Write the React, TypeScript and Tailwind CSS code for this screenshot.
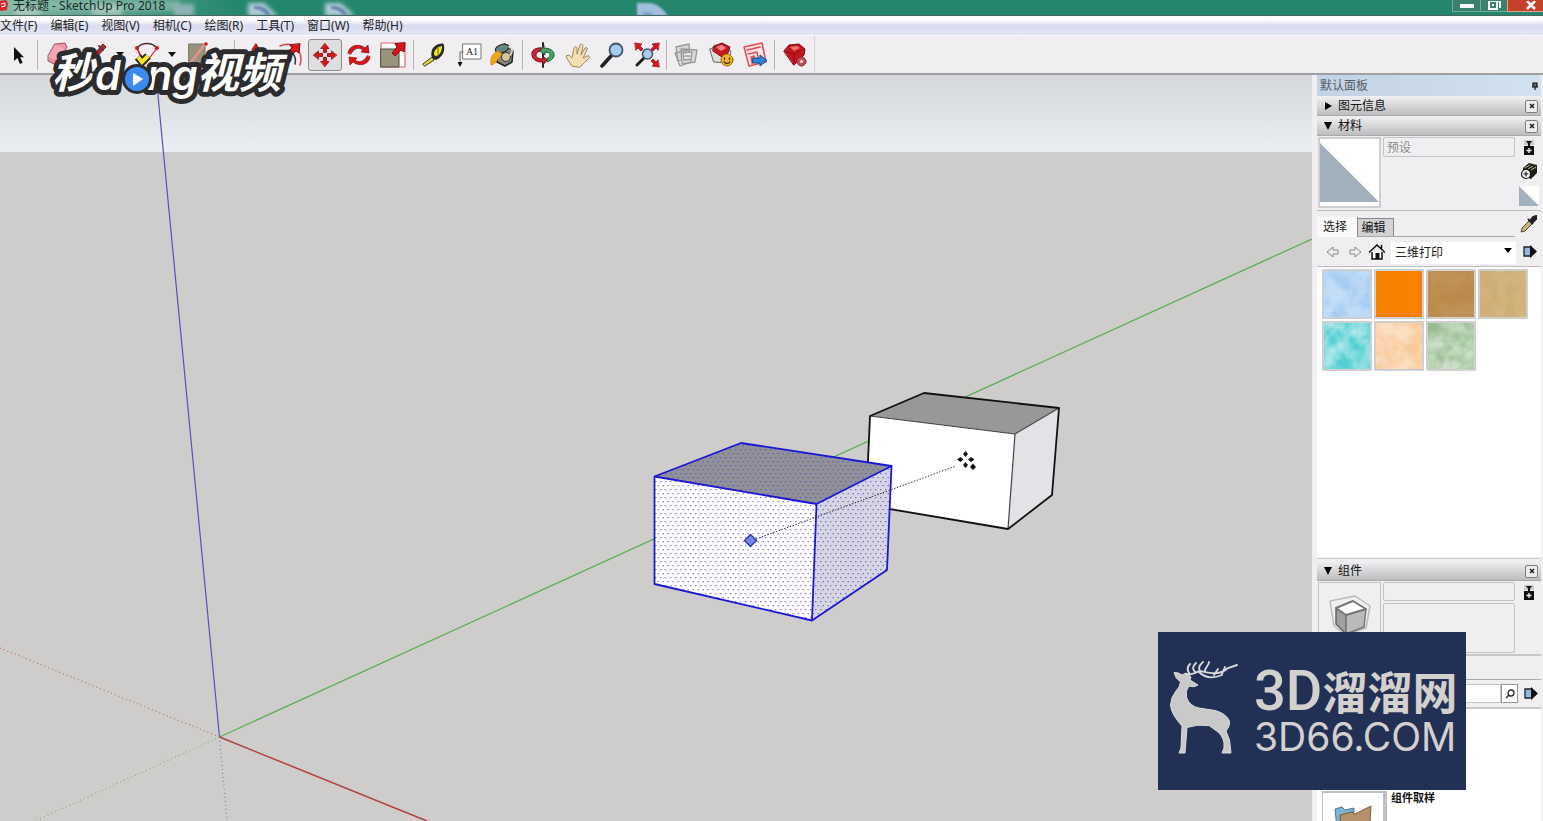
import React from "react";

const UI = "font-['Noto_Sans','Noto_Sans_CJK_SC',sans-serif]";

const menus = ["文件(F)", "编辑(E)", "视图(V)", "相机(C)", "绘图(R)", "工具(T)", "窗口(W)", "帮助(H)"];

const red = "#d8141c";

function Icon({ children }: { children: React.ReactNode }) {
  return (
    <svg viewBox="0 0 26 26" className="size-[26px] shrink-0" strokeLinecap="round" strokeLinejoin="round" aria-hidden="true">
      {children}
    </svg>
  );
}

const icons: Record<string, React.ReactNode> = {
  select: <path d="M9 5v14l3.4-3 2.6 6 2.6-1.2-2.5-5.6H19z" fill="#111" />,
  eraser: (
    <>
      <path d="M9 2l10-1 2 4-3 6-8 12-8-4 0-5z" fill="#ee91a6" stroke="#9d5264" />
      <path d="M2 15l8 3 8-12-9-3z" fill="#f4a7b8" />
      <path d="M10 17v6" stroke="#c06a7c" />
    </>
  ),
  pencil: (
    <>
      <path d="M3 24l3-7L19 2l3 3L9 19z" fill="#c8222a" stroke="#58201d" />
      <path d="M15 4l4 4" stroke="#444" strokeWidth="2" />
    </>
  ),
  arc: (
    <>
      <path d="M3 6C8 0 18 0 23 6" fill="none" stroke="#333" strokeWidth="1.4" />
      <path d="M3 6l8 16L23 6M3 6l4 10" fill="none" stroke={red} strokeWidth="1.2" />
      <circle cx="3" cy="6" r="2" fill={red} />
      <circle cx="23" cy="6" r="2" fill={red} />
    </>
  ),
  rect: (
    <>
      <path d="M5 2h16v22H5z" fill="#99937c" stroke="#777263" />
      <path d="M5 23L21 2" stroke="#ee8f8f" strokeWidth="2.2" />
      <circle cx="22" cy="2" r="1.8" fill={red} />
    </>
  ),
  push: (
    <>
      <path d="M3 18l8-5 12 4-9 6z" fill="#99937c" stroke="#555" />
      <path d="M13 2l4 6v3h-2v6h-4v-6H9V8z" fill={red} stroke="#8b0d12" />
    </>
  ),
  offset: (
    <>
      <path d="M2 4C15-2 26 10 22 23" fill="none" stroke="#e5444a" strokeWidth="1.5" />
      <path d="M5 10c8-3 14 3 12 12" fill="none" stroke="#333" strokeWidth="1.5" />
      <path d="M22 2l-1 9-3-2-5 5-4-4 5-4-2-3z" fill={red} stroke="#7c0c10" />
    </>
  ),
  move: (
    <g fill={red} stroke="#8b0d12" strokeWidth=".8">
      <path d="M13 1.500l4 5h-2.500v4h-3v-4H9z" />
      <path d="M13 24.500l4-5h-2.500v-4h-3v4H9z" />
      <path d="M1.500 13l5-4v2.500h4v3h-4V17z" />
      <path d="M24.500 13l-5-4v2.500h-4v3h4V17z" />
    </g>
  ),
  rotate: (
    <g fill={red} stroke="#8b0d12" strokeWidth=".7">
      <path d="M2 11C3 3 13 1 19 6l3-3 1 8-8-1 2-2C13 5 8 6 5 12z" />
      <path d="M24 15c-1 8-11 10-17 5l-3 3-1-8 8 1-2 2c4 3 9 2 12-4z" />
    </g>
  ),
  scale: (
    <>
      <path d="M1 1h24v24H1z" fill="#fff" stroke="#e6646a" strokeWidth="1.200" />
      <path d="M1 7h18v18H1z" fill="#99937c" stroke="#4b483d" />
      <path d="M25 1l-1 9-3-2-6 6-3-3 5-6-2-3z" fill={red} stroke="#7c0c10" />
    </>
  ),
  tape: (
    <>
      <path d="M2 22l9-7 2 3-9 6z" fill="#e8dc28" stroke="#333" />
      <path d="M11 13C10 6 15 2 22 2c2 5 0 12-6 15-3 1-5-1-5-4z" fill="#2b2b28" stroke="#1b1b1b" />
      <path d="M13 12c0-4 3-7 8-8 0 5-2 9-6 10-1 0-2-1-2-2z" fill="#f0e52b" />
      <path d="M17 6v6" stroke="#6d6a1a" />
    </>
  ),
  text: (
    <>
      <path d="M7 2h18v15H7z" fill="#fff" stroke="#777" />
      <text x="16" y="13" fontSize="10" textAnchor="middle" fill="#222" fontFamily="Liberation Serif">A1</text>
      <path d="M7 10H4v12" fill="none" stroke="#666" />
      <path d="M1.500 20h5L4 25z" fill="#111" />
    </>
  ),
  paint: (
    <>
      <path d="M8 6l8-4 8 7-1 11-7 4-8-4z" fill="#8c8877" stroke="#222" strokeWidth="1.500" />
      <ellipse cx="13" cy="6.500" rx="7" ry="4" fill="#64867f" stroke="#222" transform="rotate(-18 13 6.500)" />
      <circle cx="17" cy="15" r="4.500" fill="#cfc6a4" stroke="#333" />
      <path d="M20 5c4 1 4 6 1 8" fill="none" stroke="#e4dfce" strokeWidth="1.600" />
      <path d="M9 9C3 11 1 17 2 23c4 0 5-4 8-7l3-4z" fill="#f3a51c" stroke="#c77c08" strokeWidth=".7" />
    </>
  ),
  orbit: (
    <>
      <path d="M13 1v24" stroke="#222" strokeWidth="2" />
      <path d="M12 6C5 5 1 9 2 13c1 6 6 7 11 7v3l4-5-4-4v3c-4 0-7-1-7-4s3-4 6-4z" fill="#cf2433" stroke="#6c1018" />
      <path d="M14 6c6 0 11 3 10 8-1 3-4 5-7 6v-4c2 0 3-1 3-3s-2-3-5-3v3l-5-4 4-5z" fill="#3fa968" stroke="#1d5432" />
    </>
  ),
  hand: <path d="M8 24c-3-4-5-7-6-10l3-1 3 3 2-10c1-2 3-1 3 0v6l3-9c1-2 3-1 3 1l-2 9 4-7c1-1 3 0 2 2l-4 8 4-2c2-1 3 1 2 2l-6 6-3 3z" fill="#f3dfb4" stroke="#a08559" strokeWidth="1" />,
  zoom: (
    <>
      <path d="M3 24l9-10" stroke="#222" strokeWidth="3.500" />
      <circle cx="17" cy="8" r="6.500" fill="#a9cdec" stroke="#44536a" strokeWidth="1.800" />
    </>
  ),
  extents: (
    <>
      <path d="M3 23l8-8" stroke="#222" strokeWidth="3" />
      <circle cx="13.500" cy="12" r="5" fill="#a9cdec" stroke="#44536a" strokeWidth="1.500" />
      <g fill={red} stroke="#8b0d12" strokeWidth=".7">
        <path d="M1 1l7 1-2 2 3 3-2 2-3-3-2 2z" />
        <path d="M25 1l-7 1 2 2-3 3 2 2 3-3 2 2z" />
        <path d="M25 25l-7-1 2-2-3-3 2-2 3 3 2-2z" />
      </g>
    </>
  ),
  warehouse: (
    <g fill="#d7d7d7" stroke="#999" strokeWidth="1.300">
      <path d="M3 5l13-3 1 13-12 4z" />
      <path d="M8 7l16 1-2 12-13 2z" />
      <path d="M2 11l14-3 2 12-11 4z" fill="none" />
      <path d="M10 11l9-1-1 7-7 1zM12 14h5" fill="#eee" />
    </g>
  ),
  extension: (
    <>
      <path d="M2 7l12-5 9 7-3 12-14-1z" fill="#ddd" stroke="#666" />
      <path d="M6 4l8-3 8 4-2 6-6 4-9-6z" fill="#c51b24" stroke="#7c0c10" />
      <path d="M8 5l6-2 4 3-5 3z" fill="#f0878a" />
      <circle cx="19" cy="18" r="6" fill="#f2b728" stroke="#9b6808" />
      <path d="M16.500 16v1.500M21.500 16v1.500M16 20q3 3 6 0" fill="none" stroke="#4b3300" strokeWidth="1.300" />
    </>
  ),
  layout: (
    <>
      <path d="M2 5l18-4 4 19-17 4z" fill="#fbe5e5" stroke="#e24b51" strokeWidth="1.500" />
      <path d="M5 8l13-3M6 12l9-2 2 10M9 15l3-1 1 6-3 1z" fill="none" stroke="#e24b51" strokeWidth="1.500" />
      <path d="M11 16h7v-3l7 5.500-7 5.500v-3h-7z" fill="#2b86d9" stroke="#174d86" />
    </>
  ),
  gem: (
    <>
      <path d="M2 9l5-6 10-1 6 5-1 6-10 10z" fill="#c3151f" stroke="#760c12" />
      <path d="M3 9l9 3 10-5M12 12v10" fill="none" stroke="#8e0e15" />
      <path d="M8 5l7-1 3 2-6 3z" fill="#ef7074" />
      <circle cx="19.500" cy="19.500" r="4.500" fill="#c94c55" stroke="#8a3038" />
      <circle cx="19.500" cy="19.500" r="1.600" fill="#f3dcdc" />
    </>
  ),
};

type Tool = { kind: "tool" | "drop" | "sep"; icon?: string; label?: string; width: string; active?: boolean };

const tools: Tool[] = [
  { kind: "tool", icon: "select", label: "选择", width: "w-9" },
  { kind: "sep", width: "w-[2px]" },
  { kind: "tool", icon: "eraser", label: "擦除", width: "w-[42px]" },
  { kind: "tool", icon: "pencil", label: "直线", width: "w-[34px]" },
  { kind: "drop", label: "直线选项", width: "w-3" },
  { kind: "tool", icon: "arc", label: "圆弧", width: "w-[42px]" },
  { kind: "drop", label: "圆弧选项", width: "w-2" },
  { kind: "tool", icon: "rect", label: "矩形", width: "w-[42px]" },
  { kind: "drop", label: "矩形选项", width: "w-3" },
  { kind: "sep", width: "w-2" },
  { kind: "tool", icon: "push", label: "推拉", width: "w-9" },
  { kind: "tool", icon: "offset", label: "偏移", width: "w-[34px]" },
  { kind: "tool", icon: "move", label: "移动", width: "w-[34px]", active: true },
  { kind: "tool", icon: "rotate", label: "旋转", width: "w-[34px]" },
  { kind: "tool", icon: "scale", label: "缩放", width: "w-[34px]" },
  { kind: "sep", width: "w-[6px]" },
  { kind: "tool", icon: "tape", label: "卷尺", width: "w-9" },
  { kind: "tool", icon: "text", label: "文字", width: "w-[34px]" },
  { kind: "tool", icon: "paint", label: "材质", width: "w-8" },
  { kind: "sep", width: "w-2" },
  { kind: "tool", icon: "orbit", label: "环绕观察", width: "w-[34px]" },
  { kind: "tool", icon: "hand", label: "平移", width: "w-[34px]" },
  { kind: "tool", icon: "zoom", label: "视图缩放", width: "w-9" },
  { kind: "tool", icon: "extents", label: "充满视窗", width: "w-[34px]" },
  { kind: "sep", width: "w-1" },
  { kind: "tool", icon: "warehouse", label: "模型库", width: "w-9" },
  { kind: "tool", icon: "extension", label: "扩展程序库", width: "w-[34px]" },
  { kind: "tool", icon: "layout", label: "发送到布局", width: "w-[34px]" },
  { kind: "sep", width: "w-1" },
  { kind: "tool", icon: "gem", label: "扩展程序管理器", width: "w-[38px]" },
];

function TitleBar() {
  return (
    <header className="flex h-4 shrink-0 items-start justify-between overflow-hidden border-b border-[#47675f] bg-[#24866d]">
      <div className="relative flex h-full flex-1 items-start">
        <div className="absolute inset-0 flex h-full items-end overflow-hidden">
          <svg viewBox="0 0 700 15" className="h-[15px] w-[700px] shrink-0" aria-hidden="true">
            <defs>
              <filter id="glow" x="-20%" y="-60%" width="140%" height="220%"><feGaussianBlur stdDeviation="2" /></filter>
              <filter id="soft"><feGaussianBlur stdDeviation="1" /></filter>
              <linearGradient id="glass" x1="0" x2="1"><stop offset="0" stopColor="#7fb5a4" /><stop offset="1" stopColor="#24866d" /></linearGradient>
            </defs>
            <rect width="240" height="16" fill="url(#glass)" />
            <g filter="url(#glow)">
              <path d="M-10 0h190v11H-10z" fill="#8ebcae" opacity=".7" />
              <path d="M15 7h25v9H15zM92 5h30v11H92z" fill="#c6d5cf" opacity=".6" />
              <path d="M174 4h20v12h-20z" fill="#8fb3b5" />
              <path d="M248 3h16l14 13h-30zM325 3h16l14 13h-30z" fill="#b0cdd6" />
            </g>
            <path d="M254 6q12-1 17 9h-5q-4-6-12-6zM331 6q12-1 17 9h-5q-4-6-12-6z" fill="#6282b0" filter="url(#soft)" />
            <g filter="url(#soft)">
              <path d="M637 3h14q10 2 17 13h-31z" fill="#a0c0dc" />
              <path d="M643 12h8l2 4h-10z" fill="#7d9fca" />
            </g>
          </svg>
        </div>
        <div className="relative flex items-start gap-[5px]">
          <svg viewBox="0 0 8 12" className="h-3 w-2" aria-hidden="true">
            <path d="M0 1l6-1 2 3-1 7-7 1z" fill="#d8262c" />
            <path d="M1 4l4-1v3l-4 1" fill="none" stroke="#fff" />
          </svg>
          <h1 className="text-[12px] leading-[12px] whitespace-nowrap text-[#132c26]">无标题 - SketchUp Pro 2018</h1>
        </div>
      </div>
      <div className="flex h-3 shrink-0">
        <button aria-label="最小化" className="flex w-[29px] items-center justify-center border border-t-0 border-[#75ad9c] bg-[#3b806e]">
          <svg viewBox="0 0 14 4" className="h-1 w-[14px]"><path d="M0 0h14v4H0z" fill="#f5f5f5" /></svg>
        </button>
        <button aria-label="还原" className="flex w-[26px] items-center justify-center border-b border-[#75ad9c] bg-[#3b806e]">
          <svg viewBox="0 0 13 10" className="h-[10px] w-[13px]" fill="none" stroke="#f5f5f5" strokeWidth="2"><path d="M4 0h8v7M1 0h8v8H1zM5 3v2" /></svg>
        </button>
        <button aria-label="关闭" className="flex w-9 items-center justify-end border-b border-l border-[#e9a08f] bg-[#c4412b] pr-[6px]">
          <svg viewBox="0 0 12 9" className="h-[9px] w-3" stroke="#fff" strokeWidth="2.500"><path d="M2 0l8 8M10 0L2 8" /></svg>
        </button>
      </div>
    </header>
  );
}

function MenuBar() {
  return (
    <nav className="flex h-[19px] shrink-0 items-end gap-[13px] bg-linear-to-b from-[#fdfdff] from-20% via-[#d9dcf0] via-50% to-[#e4e6f5]">
      {menus.map((m) => (
        <button key={m} className="text-[12px] leading-[18px] whitespace-nowrap text-[#222]">{m}</button>
      ))}
    </nav>
  );
}

function Toolbar() {
  return (
    <div className="flex h-10 shrink-0 items-stretch border-t border-b-2 border-t-[#f9f8fa] border-b-[#a09fa1] bg-[#f0eef1]" role="toolbar">
      <div className="flex items-center border-r border-[#d3d2d4]">
        {tools.map((t, i) => {
          if (t.kind === "sep")
            return (
              <span key={i} className={`${t.width} flex h-[30px] justify-center`}>
                <span className="w-px bg-[#b3b2b4]" />
              </span>
            );
          if (t.kind === "drop")
            return (
              <button key={i} aria-label={t.label} className={`${t.width} flex h-8 items-center justify-center`}>
                <svg viewBox="0 0 8 6" className="h-[6px] w-2"><path d="M0 0h8L4 5z" fill="#111" /></svg>
              </button>
            );
          return (
            <button
              key={i}
              aria-label={t.label}
              className={`${t.width} ${t.active ? "rounded-[3px] border border-[#8b8a8c] bg-[#dedddf]" : ""} flex h-8 items-center justify-center`}
            >
              <Icon>{icons[t.icon as string]}</Icon>
            </button>
          );
        })}
      </div>
    </div>
  );
}

function Viewport() {
  return (
    <main className="min-w-0 flex-1 overflow-hidden bg-[#cecdcb]">
      <svg viewBox="0 75 1312 746" preserveAspectRatio="xMinYMin slice" className="h-full w-full" role="img" aria-label="模型视图">
        <defs>
          <linearGradient id="sky" x1="0" y1="0" x2="0" y2="1">
            <stop offset="0" stopColor="#d5d7db" />
            <stop offset="1" stopColor="#ebeff0" />
          </linearGradient>
          <pattern id="dots" width="5" height="8" patternUnits="userSpaceOnUse">
            <path d="M0 1h1.400v1.300H0zM2.500 5h1.400v1.300H2.500z" fill="#4a4ae0" opacity=".75" />
          </pattern>
        </defs>
        <rect x="0" y="75" width="1312" height="77" fill="url(#sky)" />
        <rect x="0" y="152" width="1312" height="700" fill="#cecdcb" />

        <g fill="none" strokeWidth="1.200">
          <path d="M219.500 737L1312 239" stroke="#55b04f" />
          <path d="M219.500 737L156 75" stroke="#5452c0" />
          <path d="M219.500 737L427 821" stroke="#b0403e" strokeWidth="1.500" />
          <path d="M219.500 737L0 648" stroke="#bf7373" strokeDasharray="1 3" />
          <path d="M219.500 737L35 821" stroke="#78b478" strokeDasharray="1 3" />
          <path d="M219.500 737L227 821" stroke="#7c7cc4" strokeDasharray="1 3" />
        </g>

        <g strokeLinejoin="round">
          <path d="M870 416L1015 434 1008 529 866 505z" fill="#fff" />
          <path d="M870 416L924 393 1059 408 1015 434z" fill="#999899" />
          <path d="M1015 434L1059 408 1052 495 1008 529z" fill="#e3e2e7" />
          <path d="M870 416L1015 434 1008 529M1015 434L1059 408" fill="none" stroke="#444" strokeWidth="1.200" />
          <path d="M866 505L870 416 924 393 1059 408 1052 495 1008 529z" fill="none" stroke="#111" strokeWidth="1.800" />
        </g>

        <g strokeLinejoin="round">
          <path d="M654.500 476.500L816.500 504 812 620.500 654.500 584z" fill="#fff" />
          <path d="M654.500 476.500L741 443 891.500 466 816.500 504z" fill="#929196" />
          <path d="M816.500 504L891.500 466 887 570 812 620.500z" fill="#d6d5e0" />
          <path d="M654.500 476.500L741 443 891.500 466 887 570 812 620.500 654.500 584z" fill="url(#dots)" />
          <path d="M654.500 476.500L741 443 891.500 466 887 570 812 620.500 654.500 584zM654.500 476.500L816.500 504 812 620.500M816.500 504L891.500 466" fill="none" stroke="#1a18d4" strokeWidth="1.800" />
        </g>

        <path d="M756 539L956 466" stroke="#333" strokeDasharray="1.500 1.500" />
        <path d="M750.500 534.500l6 6-6 6-6-6z" fill="#7486ea" stroke="#2b35ab" strokeWidth="1.400" />
        <path d="M965.500 451l2.500 3-2.500 3-2.500-3zM965.500 462l2.500 3-2.500 3-2.500-3zM957 459.500l3.500-2.500 3 2.500-3 2.500zM968 459.500l3-2.500 3.500 2.500-3.500 2.500zM973 463.500l3 3.500-3 3-3-3z" fill="#111" />
      </svg>
    </main>
  );
}

function PanelHeader({ title, open }: { title: string; open: boolean }) {
  return (
    <div className="flex h-[19px] shrink-0 items-center border-b border-[#a9a8aa] bg-linear-to-b from-[#efeef0] to-[#bdbcbe] pr-[3px] pl-[7px]">
      <button className="flex flex-1 items-center gap-[6px] text-left text-[12px] leading-[18px] text-[#111]" aria-expanded={open}>
        <svg viewBox="0 0 8 8" className="size-2">{open ? <path d="M0 0h8L4 8z" /> : <path d="M1 0l7 4-7 4z" />}</svg>
        {title}
      </button>
      <button aria-label={`关闭${title}`} className="flex size-[13px] items-center justify-center rounded-[2px] border border-[#7e7d7f] bg-[#ececee]">
        <svg viewBox="0 0 6 6" className="size-[6px]" stroke="#222" strokeWidth="1.500"><path d="M1 1l4 4M5 1L1 5" /></svg>
      </button>
    </div>
  );
}

function Lock() {
  return (
    <svg viewBox="0 0 12 16" className="h-4 w-3">
      <path d="M1 0h10v5H1z" fill="#ccc" />
      <path d="M3 1h6L6 5z" fill="#111" />
      <path d="M5 4h2v2H5zM1 6h10v9H1z" fill="#111" />
      <path d="M6 8v5M3.500 10.500h5" stroke="#fff" strokeWidth="1.300" />
    </svg>
  );
}

function Details() {
  return (
    <svg viewBox="0 0 14 14" className="size-[14px]">
      <path d="M1 2h7v9H1z" fill="#8fb9e4" stroke="#222" strokeWidth="1.300" />
      <path d="M7 0l7 6.500L7 13z" fill="#111" />
    </svg>
  );
}

const swatches = [
  { name: "浅蓝", cls: "bg-[#a5ccf2]", grain: 0.35 },
  { name: "橙色", cls: "bg-[#fa8000]", grain: 0 },
  { name: "棕色", cls: "bg-[#bb8949]", grain: 0.08 },
  { name: "浅棕", cls: "bg-[#cdac72]", grain: 0.1 },
  { name: "青色", cls: "bg-[#50ced2]", grain: 0.5 },
  { name: "浅橙", cls: "bg-[#fac998]", grain: 0.4 },
  { name: "绿色", cls: "bg-[#97bd90]", grain: 0.5 },
];

function Materials() {
  return (
    <section className="flex flex-col">
      <PanelHeader title="材料" open />
      <div className="flex h-[75px] gap-[2px] border-b border-[#bcbbbd] pt-[1px] pl-px">
        <div className="h-[71px] w-[63px] border-2 border-[#cfced0] bg-white">
          <svg viewBox="0 0 59 67" className="h-full w-full" preserveAspectRatio="none"><path d="M0 4L59 63H0z" fill="#a3b0bd" /></svg>
        </div>
        <input aria-label="材料名称" defaultValue="预设" className="h-5 w-[132px] rounded-[2px] border border-[#c4c3c5] bg-[#f0eef1] px-[3px] text-[12px] text-[#8b8a8c]" />
        <div className="flex flex-1 flex-col items-center gap-[6px] pt-[3px]">
          <button aria-label="显示辅助窗格"><Lock /></button>
          <button aria-label="创建材质">
            <svg viewBox="0 0 18 18" className="size-[18px]">
              <path d="M3 6l6-5 8 2v8l-6 6-8-3z" fill="#1d1d18" />
              <path d="M5 6l5-3M8 7l5-3M11 8l5-3" stroke="#b9b692" />
              <circle cx="6" cy="12" r="4.500" fill="#fff" stroke="#111" strokeWidth="1.200" />
              <path d="M6 9.500v5M3.500 12h5" stroke="#111" strokeWidth="1.200" />
            </svg>
          </button>
          <button aria-label="默认材质">
            <svg viewBox="0 0 20 20" className="size-5"><path d="M0 0h20v20H0z" fill="#fff" /><path d="M0 0l20 20H0z" fill="#a3b0bd" /></svg>
          </button>
        </div>
      </div>
      <div className="flex h-[26px] items-end justify-between">
        <div className="flex flex-1 items-end border-b border-[#a8a7a9]" role="tablist">
          <button role="tab" aria-selected="true" className="-mb-px h-5 w-[41px] border-r border-[#88878a] bg-[#f9f8fa] pr-1 text-[12px] leading-[16px] text-[#222]">选择</button>
          <button role="tab" aria-selected="false" className="h-[18px] w-9 border-t border-r border-[#88878a] bg-[#d2d1d3] pr-1 text-[12px] leading-[16px] text-[#111]">编辑</button>
        </div>
        <button aria-label="提取材质" className="px-1 pb-1">
          <svg viewBox="0 0 18 18" className="size-[18px]">
            <path d="M2 17l1-4 7-7 3 3-7 7z" fill="#c6b57a" stroke="#4d4a3d" />
            <path d="M9 4l5 5M11 6l3-4 3-1v3l-4 4z" fill="#222" stroke="#222" strokeWidth="2" />
          </svg>
        </button>
      </div>
      <div className="flex h-[30px] items-center border-b border-[#bcbbbd] pr-1 pl-2">
        <button aria-label="后退" className="w-[23px] pl-[1px]">
          <svg viewBox="0 0 14 14" className="size-[14px]"><path d="M1 7l6-5v3h5v4H7v3z" fill="#eee" stroke="#888" /></svg>
        </button>
        <button aria-label="前进" className="w-[21px]">
          <svg viewBox="0 0 14 14" className="size-[14px]"><path d="M13 7L7 2v3H2v4h5v3z" fill="#eee" stroke="#888" /></svg>
        </button>
        <button aria-label="模型中" className="w-[22px]">
          <svg viewBox="0 0 16 16" className="size-4"><path d="M3 8v7h10V8" fill="#fff" stroke="#111" strokeWidth="1.500" /><path d="M0 8.500L8 1l8 7.500M12.500 1v4" fill="none" stroke="#111" strokeWidth="1.500" /><path d="M6.500 9h4v6h-4z" fill="#111" /></svg>
        </button>
        <div className="relative flex-1">
          <select aria-label="材质库" className="h-[22px] w-full appearance-none bg-white pl-1 text-[12px] text-[#222]">
            <option>三维打印</option>
          </select>
          <svg viewBox="0 0 8 5" className="pointer-events-none absolute top-[9px] right-1 h-[5px] w-2"><path d="M0 0h8L4 5z" /></svg>
        </div>
        <button aria-label="材料详细信息" className="ml-[7px]"><Details /></button>
      </div>
      <div className="flex h-[290px] flex-wrap content-start gap-[2px] bg-white pt-[2px] pl-[5px]">
        {swatches.map((s, i) => (
          <button key={s.name} aria-label={s.name} className={`${s.cls} size-[50px] border-2 border-[#cfced0]`}>
            {s.grain > 0 && (
              <svg viewBox="0 0 46 46" className="size-full">
                <filter id={`grain${i}`} x="0" y="0" width="100%" height="100%">
                  <feTurbulence type="fractalNoise" baseFrequency="0.06" numOctaves="3" seed={i + 3} />
                  <feColorMatrix values="0 0 0 0 1  0 0 0 0 1  0 0 0 0 1  2.4 0 0 0 -0.7" />
                </filter>
                <rect width="46" height="46" filter={`url(#grain${i})`} opacity={s.grain} />
              </svg>
            )}
          </button>
        ))}
      </div>
    </section>
  );
}

function Components() {
  return (
    <section className="flex min-h-0 flex-1 flex-col border-t border-[#d0cfd1] pt-[3px]">
      <PanelHeader title="组件" open />
      <div className="flex h-[75px] shrink-0 gap-[2px] border-b-2 border-[#c7c6c8] pt-px pl-px">
        <div className="flex h-[71px] w-[63px] justify-center border border-[#c4c3c5] pt-3">
          <svg viewBox="0 0 42 42" className="size-[42px]" strokeLinejoin="round">
            <path d="M1 6l25-5 15 10-4 22-21 7L5 31z" fill="none" stroke="#bbb" strokeWidth="1.500" />
            <path d="M7 13v16l10 10V20z" fill="#a09fa1" stroke="#666" strokeWidth="1.500" />
            <path d="M17 20l20-6-2 18-18 7z" fill="#bab9bb" stroke="#777" strokeWidth="1.500" />
            <path d="M7 13l17-7 13 8-20 6z" fill="#fff" stroke="#777" strokeWidth="2" />
          </svg>
        </div>
        <div className="flex flex-col gap-[2px]">
          <input aria-label="组件名称" className="h-[19px] w-[132px] rounded-[2px] border border-[#c4c3c5] bg-[#f0eef1] px-1 text-[12px]" />
          <textarea aria-label="组件说明" className="h-[50px] w-[132px] resize-none rounded-[2px] border border-[#c4c3c5] bg-[#f0eef1] px-1 text-[12px]" />
        </div>
        <div className="flex flex-1 justify-center pt-[3px]">
          <button aria-label="显示辅助窗格" className="h-4"><Lock /></button>
        </div>
      </div>
      <div className="h-6 shrink-0 border-b border-[#a8a7a9]" />
      <div className="flex h-[29px] shrink-0 items-center border-b-2 border-[#c7c6c8] pr-[3px] pl-[74px]">
        <input aria-label="搜索组件" className="h-[19px] min-w-0 flex-1 border border-[#c4c3c5] bg-white px-1 text-[12px]" />
        <button aria-label="搜索" className="flex h-[19px] w-[17px] items-center justify-center border border-[#99989a] bg-white">
          <svg viewBox="0 0 10 10" className="size-[10px]" fill="none" stroke="#222" strokeWidth="1.300"><circle cx="6" cy="4" r="3" /><path d="M4 6L1 9" /></svg>
        </button>
        <button aria-label="组件详细信息" className="ml-[6px]"><Details /></button>
      </div>
      <div className="flex min-h-0 flex-1 items-start gap-1 overflow-hidden bg-white pt-[82px] pl-[5px]">
        <div className="flex h-[66px] w-[65px] shrink-0 justify-center border-t-2 border-r-4 border-l border-[#c0bfc1] bg-white pt-3">
          <svg viewBox="0 0 38 40" className="h-10 w-[38px]">
            <path d="M1 4l7-2 3 3 9-2v30H4z" fill="#7fb3d4" stroke="#4f7790" />
            <path d="M6 10l12-3 3 2 16-8-2 32-27 5z" fill="#b5926a" stroke="#785c3d" />
          </svg>
        </div>
        <span className="text-[11px] leading-[14px] font-bold text-[#111]">组件取样</span>
      </div>
    </section>
  );
}

function Tray() {
  return (
    <aside className="flex w-[231px] shrink-0 flex-col overflow-hidden bg-[#f0eef1] pr-[2px] pl-[5px]">
      <div className="flex h-[21px] shrink-0 items-center justify-between bg-linear-to-r from-[#c3d2e4] to-[#d3e2f1] pr-[2px] pl-[3px]">
        <h2 className="text-[12px] leading-[18px] text-[#555d66]">默认面板</h2>
        <button aria-label="自动隐藏">
          <svg viewBox="0 0 8 8" className="size-2"><path d="M2 1h4v4H2z" fill="#667" /><path d="M2 1h4v4H2zM1 5h6M4 5v3" fill="none" stroke="#111" strokeWidth="1.200" /></svg>
        </button>
      </div>
      <div className="flex min-h-0 flex-1 flex-col gap-px pt-px">
        <PanelHeader title="图元信息" open={false} />
        <Materials />
        <Components />
      </div>
    </aside>
  );
}

function VideoMark() {
  const glyphs = (
    <>
      <text x="4" y="38" fontSize="42" fontWeight="700" fontStyle="italic">秒</text>
      <text x="47" y="40" fontSize="41" fontWeight="600" fontStyle="italic" fontFamily="Inter, sans-serif">d</text>
      <text x="99" y="40" fontSize="41" fontWeight="600" fontStyle="italic" fontFamily="Inter, sans-serif">ng</text>
      <text x="149" y="38" fontSize="42" fontWeight="700" fontStyle="italic">视频</text>
    </>
  );
  return (
    <div className="pointer-events-none absolute top-[50px] left-[48px]">
      <svg viewBox="0 0 244 60" className="h-[60px] w-[244px] overflow-visible font-['Noto_Sans_CJK_SC',sans-serif]" role="img" aria-label="秒dong视频">
        <g fill="#fff" stroke="#2c2c2e" strokeWidth="10" strokeLinejoin="round" style={{ paintOrder: "stroke" }}>{glyphs}</g>
        <circle cx="89" cy="29" r="15" fill="#2c2c2e" />
        <circle cx="89" cy="29" r="12" fill="#3b8bf0" />
        <path d="M85 23l10 6-10 7z" fill="#fff" />
        <path d="M90 7l4 5 6-6" fill="none" stroke="#2c2c2e" strokeWidth="8" />
        <path d="M90 7l4 5 6-6" fill="none" stroke="#f7e620" strokeWidth="4" />
      </svg>
    </div>
  );
}

function SiteMark() {
  return (
    <div className="absolute right-[77px] bottom-[31px] flex h-[158px] w-[308px] items-start gap-[14px] bg-[#223055] pt-[28px] pl-[10px] text-[#d3d1ce]">
      <svg viewBox="0 0 72 94" className="h-[94px] w-[72px] shrink-0" aria-hidden="true">
        <path
          d="M6 12.500Q10 12 14 15L18 13 23 17 22 20 30 25Q26 28 21 26Q17 31 18.500 37Q21 46 31 48L47 50.500Q57 53 61 60Q63 65 58 71L61.500 80 63 93H54L56 88Q57 78 50 72L41 65.500Q29 64 19 67.500L17 93H11L13 88 14 66Q3 54 2.500 45Q3 37 8 31Q12 27 12.500 22Q7 18 6 12.500Z"
          fill="#c9c9ca"
          stroke="#dedcda"
          strokeWidth="1"
        />
        <path d="M18 14C24 16 28 12 32 11C42 13 51 16 60 8L69 5M31 12C38 19 47 18 54 15M22 14C18 10 20 6 22 4M27 12C23 8 26 5 28 3M32 11C29 7 33 4 35 2M37 11C37 7 41 6 41 2M54 14L57 7M46 15L50 9" fill="none" stroke="#d9d9da" strokeWidth="1.900" strokeLinecap="round" />
      </svg>
      <div className="flex flex-col">
        <div className="flex h-[62px] items-center whitespace-nowrap">
          <span className="font-['Roboto',sans-serif] text-[56px] leading-[62px] font-medium">3D</span>
          <span className="font-['Noto_Sans_CJK_SC',sans-serif] text-[45px] leading-[56px] font-bold">溜溜网</span>
        </div>
        <span className="font-['Inter',sans-serif] text-[39px] leading-[30px]">3D66.COM</span>
      </div>
    </div>
  );
}

export default function App() {
  return (
    <div className={`${UI} relative flex h-screen flex-col overflow-hidden bg-[#f0eef1]`}>
      <TitleBar />
      <MenuBar />
      <Toolbar />
      <div className="flex min-h-0 flex-1">
        <Viewport />
        <Tray />
      </div>
      <VideoMark />
      <SiteMark />
    </div>
  );
}
